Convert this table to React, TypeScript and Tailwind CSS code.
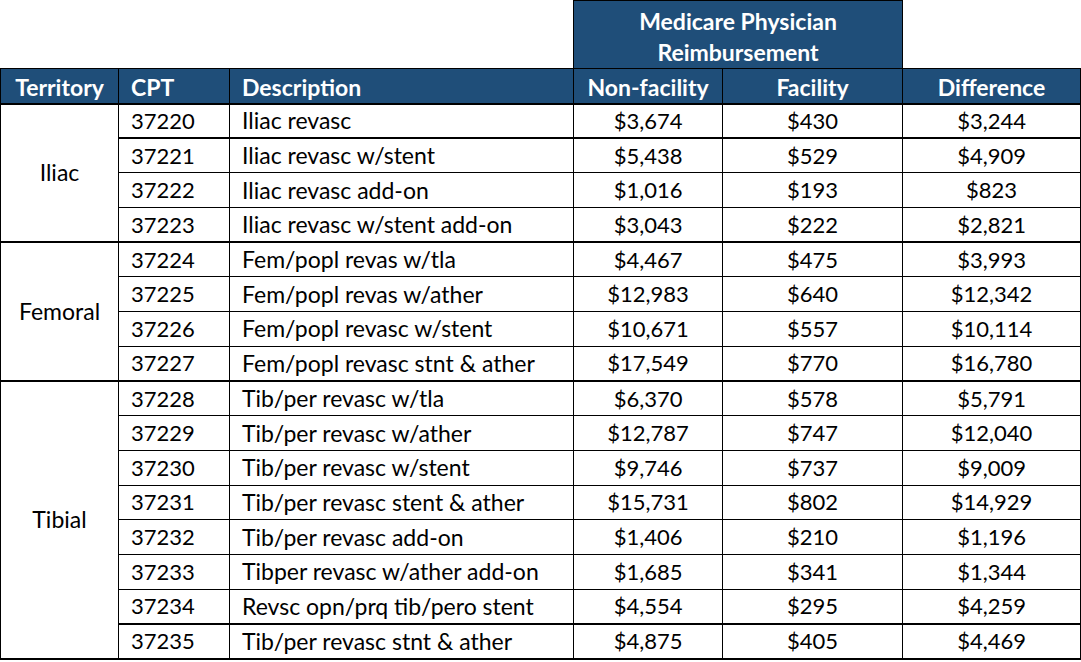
type Row = {
  cpt: string;
  desc: string;
  nonFacility: string;
  facility: string;
  diff: string;
  thickTop?: boolean;
};

type Group = { territory: string; rows: Row[] };

const groups: Group[] = [
  {
    territory: "Iliac",
    rows: [
      { cpt: "37220", desc: "Iliac revasc", nonFacility: "$3,674", facility: "$430", diff: "$3,244" },
      { cpt: "37221", desc: "Iliac revasc w/stent", nonFacility: "$5,438", facility: "$529", diff: "$4,909", thickTop: true },
      { cpt: "37222", desc: "Iliac revasc add-on", nonFacility: "$1,016", facility: "$193", diff: "$823" },
      { cpt: "37223", desc: "Iliac revasc w/stent add-on", nonFacility: "$3,043", facility: "$222", diff: "$2,821" },
    ],
  },
  {
    territory: "Femoral",
    rows: [
      { cpt: "37224", desc: "Fem/popl revas w/tla", nonFacility: "$4,467", facility: "$475", diff: "$3,993" },
      { cpt: "37225", desc: "Fem/popl revas w/ather", nonFacility: "$12,983", facility: "$640", diff: "$12,342" },
      { cpt: "37226", desc: "Fem/popl revasc w/stent", nonFacility: "$10,671", facility: "$557", diff: "$10,114" },
      { cpt: "37227", desc: "Fem/popl revasc stnt & ather", nonFacility: "$17,549", facility: "$770", diff: "$16,780" },
    ],
  },
  {
    territory: "Tibial",
    rows: [
      { cpt: "37228", desc: "Tib/per revasc w/tla", nonFacility: "$6,370", facility: "$578", diff: "$5,791" },
      { cpt: "37229", desc: "Tib/per revasc w/ather", nonFacility: "$12,787", facility: "$747", diff: "$12,040" },
      { cpt: "37230", desc: "Tib/per revasc w/stent", nonFacility: "$9,746", facility: "$737", diff: "$9,009" },
      { cpt: "37231", desc: "Tib/per revasc stent & ather", nonFacility: "$15,731", facility: "$802", diff: "$14,929" },
      { cpt: "37232", desc: "Tib/per revasc add-on", nonFacility: "$1,406", facility: "$210", diff: "$1,196" },
      { cpt: "37233", desc: "Tibper revasc w/ather add-on", nonFacility: "$1,685", facility: "$341", diff: "$1,344" },
      { cpt: "37234", desc: "Revsc opn/prq tib/pero stent", nonFacility: "$4,554", facility: "$295", diff: "$4,259" },
      { cpt: "37235", desc: "Tib/per revasc stnt & ather", nonFacility: "$4,875", facility: "$405", diff: "$4,469", thickTop: true },
    ],
  },
];

export default function App() {
  return (
    <div className="w-[1081px] h-[662px] bg-white font-['Lato','Liberation_Sans',sans-serif] text-[22px] text-black leading-none">
      <table className="border-collapse table-fixed w-[1080px]">
        <colgroup>
          <col className="w-[118px]" />
          <col className="w-[111px]" />
          <col className="w-[344px]" />
          <col className="w-[149px]" />
          <col className="w-[180px]" />
          <col className="w-[178px]" />
        </colgroup>
        <thead className="text-[23px]">
          <tr className="h-[68px]">
            <th colSpan={3} />
            <th
              colSpan={2}
              className="border border-black bg-[#1f4e79] text-white font-bold text-center leading-[31px] pt-[5px]"
            >
              Medicare Physician
              <br />
              Reimbursement
            </th>
            <th />
          </tr>
          <tr className="h-[35px] bg-[#1f4e79] text-white font-bold">
            <th className="border border-black text-center pt-[3px]">Territory</th>
            <th className="border border-black text-left pl-[12px] pt-[3px]">CPT</th>
            <th className="border border-black text-left pl-[12px] pt-[3px]">Description</th>
            <th className="border border-black text-center pt-[3px]">Non-facility</th>
            <th className="border border-black text-center pt-[3px]">Facility</th>
            <th className="border border-black text-center pt-[3px]">Difference</th>
          </tr>
        </thead>
        <tbody>
          {groups.map((group) =>
            group.rows.map((row, i) => {
              const top = i === 0 ? "border-t-2" : row.thickTop ? "border-t-2" : "border-t";
              return (
                <tr key={row.cpt} className="h-[34.7px]">
                  {i === 0 && (
                    <td
                      rowSpan={group.rows.length}
                      className="border-x border-t-2 border-b-2 border-black text-center align-middle text-[23px]"
                    >
                      {group.territory}
                    </td>
                  )}
                  <td className={`border-x border-black ${top} pl-[12px]`}>{row.cpt}</td>
                  <td className={`border-x border-black ${top} pl-[12px] text-[23px]`}>{row.desc}</td>
                  <td className={`border-x border-black ${top} text-center`}>{row.nonFacility}</td>
                  <td className={`border-x border-black ${top} text-center`}>{row.facility}</td>
                  <td className={`border-x border-black ${top} text-center`}>{row.diff}</td>
                </tr>
              );
            })
          )}
          <tr>
            <td colSpan={6} className="border-t-2 border-black" />
          </tr>
        </tbody>
      </table>
    </div>
  );
}
